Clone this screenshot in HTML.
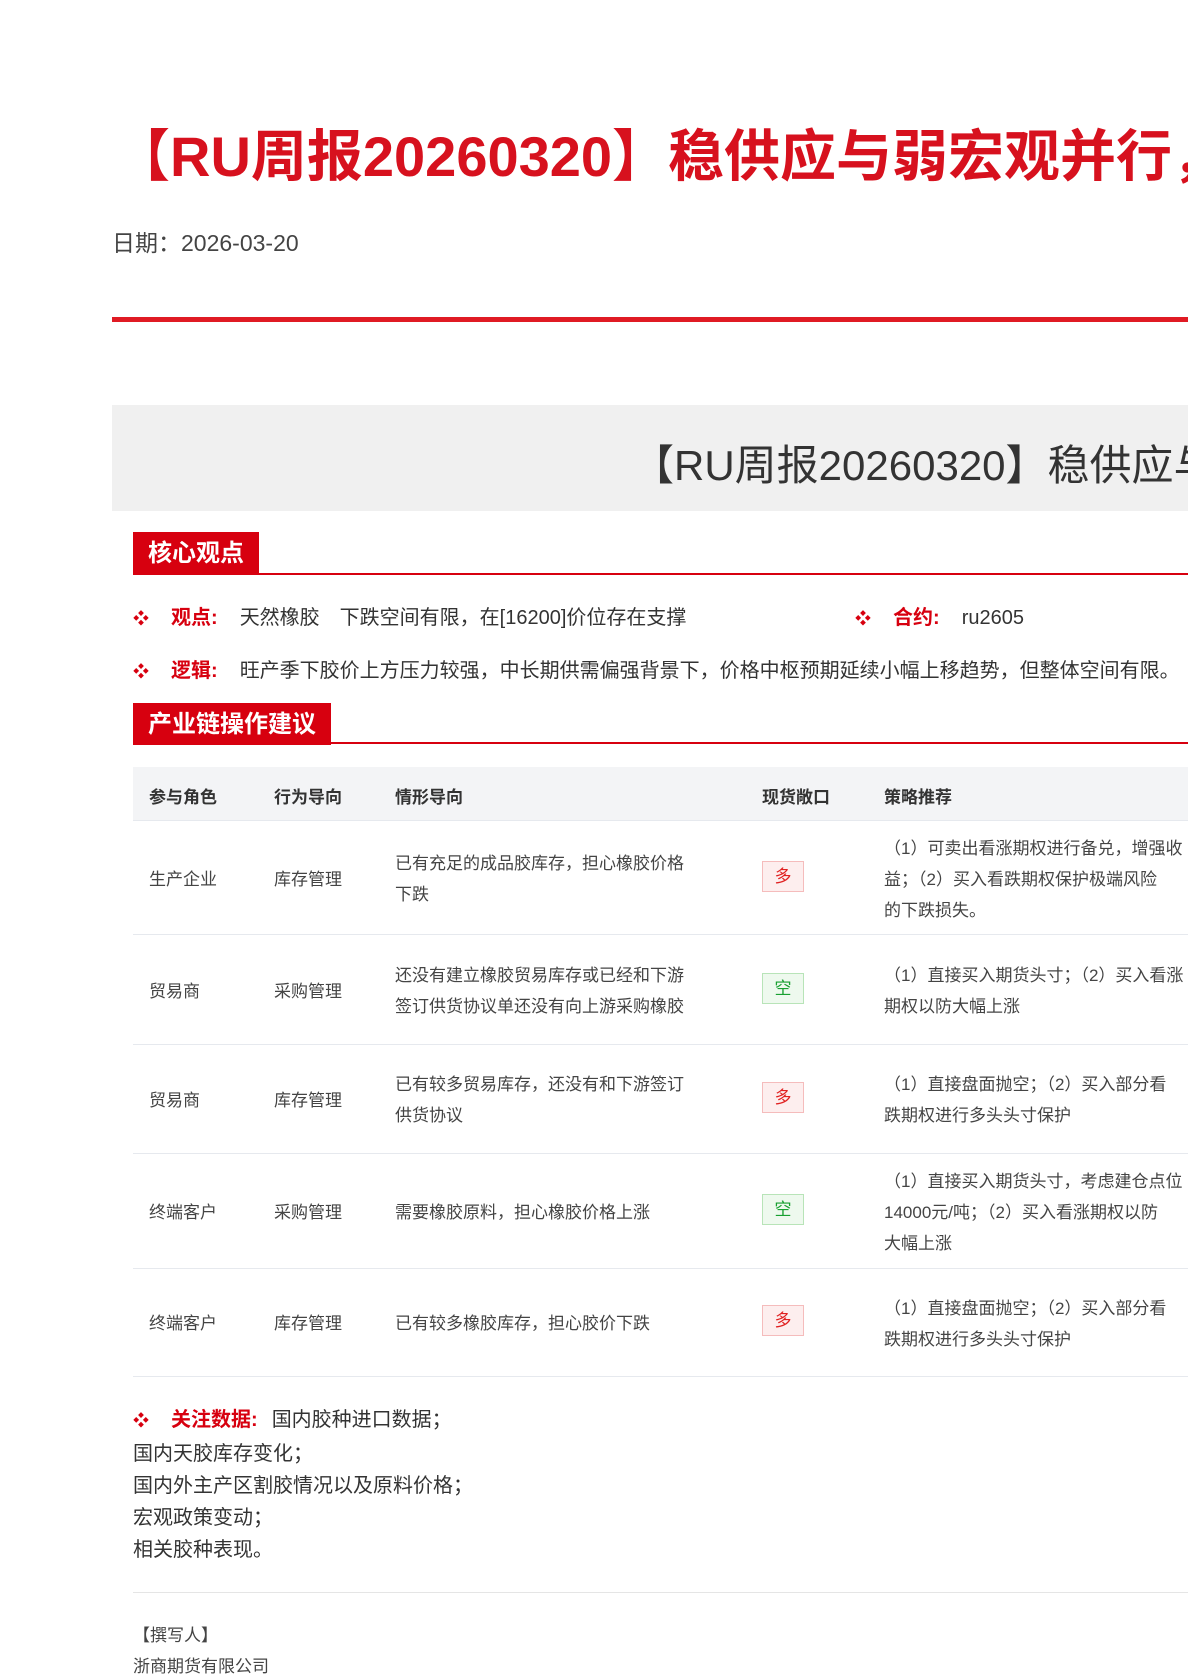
<!DOCTYPE html>
<html><head><meta charset="utf-8"><style>
*{margin:0;padding:0;box-sizing:border-box}
html{width:1188px;height:1680px;overflow:hidden}
body{width:1188px;height:1680px;overflow:hidden;background:#fff;font-family:"Liberation Sans","Noto Sans CJK SC",sans-serif;color:#333;position:relative}
.a{position:absolute;white-space:nowrap}
.clip{position:absolute;left:0;top:0;width:1188px;height:1680px;overflow:hidden}
.title{left:114px;top:112px;font-size:56px;font-weight:bold;color:#d7111e}
.date{left:112px;top:224px;font-size:23px;color:#444}
.rl{left:112px;top:317px;width:1076px;height:5px;background:#e01b24}
.gray{left:112px;top:405px;width:1076px;height:106px;background:#f0f0f0}
.gt{left:632px;top:432px;font-size:42px;color:#333}
.sh{background:#d7000f;color:#fff;font-size:24px;font-weight:bold;padding:0 15px;height:42px;line-height:44px}
.sl{left:133px;width:1055px;height:2px;background:#d7000f}
.bl{font-size:20px;color:#333}
.bl b{color:#d7000f;margin:0 22px 0 22px}
.dia{color:#d7000f;font-size:16px}
.th{left:133px;top:767px;width:1055px;height:53px;background:#f3f4f6}
.tx{font-size:17px;color:#444;line-height:31px}
.hd{font-size:17px;font-weight:bold;color:#333}
.rowl{left:133px;width:1055px;height:1px;background:#e6e9ee}
.bd{width:42px;height:31px;line-height:30px;text-align:center;font-size:17px;border:1px solid}
.r{color:#e02020;background:#fdeeee;border-color:#f5bcbc}
.g{color:#18a030;background:#eef9ee;border-color:#b8e4b8}
</style></head><body><div class="clip">
<div class="a title">【RU周报20260320】稳供应与弱宏观并行，胶价区间震荡</div>
<div class="a date">日期：2026-03-20</div>
<div class="a rl"></div>
<div class="a gray"></div>
<div class="a gt">【RU周报20260320】稳供应与弱宏观并行</div>

<div class="a sh" style="left:133px;top:532px">核心观点</div>
<div class="a sl" style="top:573px"></div>
<div class="a bl" style="left:133px;top:601px"><span class="dia">❖</span><b>观点:</b>天然橡胶　下跌空间有限，在[16200]价位存在支撑</div>
<div class="a bl" style="left:855px;top:601px"><span class="dia">❖</span><b>合约:</b>ru2605</div>
<div class="a bl" style="left:133px;top:654px"><span class="dia">❖</span><b>逻辑:</b>旺产季下胶价上方压力较强，中长期供需偏强背景下，价格中枢预期延续小幅上移趋势，但整体空间有限。</div>

<div class="a sh" style="left:133px;top:703px">产业链操作建议</div>
<div class="a sl" style="top:742px"></div>
<div class="a th"></div>
<div class="a hd" style="left:149px;top:783px">参与角色</div>
<div class="a hd" style="left:274px;top:783px">行为导向</div>
<div class="a hd" style="left:395px;top:783px">情形导向</div>
<div class="a hd" style="left:762px;top:783px">现货敞口</div>
<div class="a hd" style="left:884px;top:783px">策略推荐</div>
<div class="a rowl" style="top:820px"></div>

<div class="a tx" style="left:149px;top:864px">生产企业</div><div class="a tx" style="left:274px;top:864px">库存管理</div>
<div class="a tx" style="left:395px;top:848px">已有充足的成品胶库存，担心橡胶价格<br>下跌</div>
<div class="a bd r" style="left:762px;top:861px">多</div>
<div class="a tx" style="left:884px;top:833px">（1）可卖出看涨期权进行备兑，增强收<br>益；（2）买入看跌期权保护极端风险<br>的下跌损失。</div>
<div class="a rowl" style="top:934px"></div>

<div class="a tx" style="left:149px;top:976px">贸易商</div><div class="a tx" style="left:274px;top:976px">采购管理</div>
<div class="a tx" style="left:395px;top:960px">还没有建立橡胶贸易库存或已经和下游<br>签订供货协议单还没有向上游采购橡胶</div>
<div class="a bd g" style="left:762px;top:973px">空</div>
<div class="a tx" style="left:884px;top:960px">（1）直接买入期货头寸；（2）买入看涨<br>期权以防大幅上涨</div>
<div class="a rowl" style="top:1044px"></div>

<div class="a tx" style="left:149px;top:1085px">贸易商</div><div class="a tx" style="left:274px;top:1085px">库存管理</div>
<div class="a tx" style="left:395px;top:1069px">已有较多贸易库存，还没有和下游签订<br>供货协议</div>
<div class="a bd r" style="left:762px;top:1082px">多</div>
<div class="a tx" style="left:884px;top:1069px">（1）直接盘面抛空；（2）买入部分看<br>跌期权进行多头头寸保护</div>
<div class="a rowl" style="top:1153px"></div>

<div class="a tx" style="left:149px;top:1197px">终端客户</div><div class="a tx" style="left:274px;top:1197px">采购管理</div>
<div class="a tx" style="left:395px;top:1197px">需要橡胶原料，担心橡胶价格上涨</div>
<div class="a bd g" style="left:762px;top:1194px">空</div>
<div class="a tx" style="left:884px;top:1166px">（1）直接买入期货头寸，考虑建仓点位<br>14000元/吨；（2）买入看涨期权以防<br>大幅上涨</div>
<div class="a rowl" style="top:1268px"></div>

<div class="a tx" style="left:149px;top:1308px">终端客户</div><div class="a tx" style="left:274px;top:1308px">库存管理</div>
<div class="a tx" style="left:395px;top:1308px">已有较多橡胶库存，担心胶价下跌</div>
<div class="a bd r" style="left:762px;top:1305px">多</div>
<div class="a tx" style="left:884px;top:1293px">（1）直接盘面抛空；（2）买入部分看<br>跌期权进行多头头寸保护</div>
<div class="a rowl" style="top:1376px"></div>

<div class="a bl" style="left:133px;top:1404px;line-height:32px"><span class="dia">❖</span><b style="margin-right:14px">关注数据:</b>国内胶种进口数据；<br>国内天胶库存变化；<br>国内外主产区割胶情况以及原料价格；<br>宏观政策变动；<br>相关胶种表现。</div>
<div class="a" style="left:133px;top:1592px;width:1055px;height:1px;background:#e5e5e5"></div>
<div class="a" style="left:133px;top:1620px;font-size:17px;color:#444;line-height:31px">【撰写人】<br>浙商期货有限公司</div>
</div></body></html>
